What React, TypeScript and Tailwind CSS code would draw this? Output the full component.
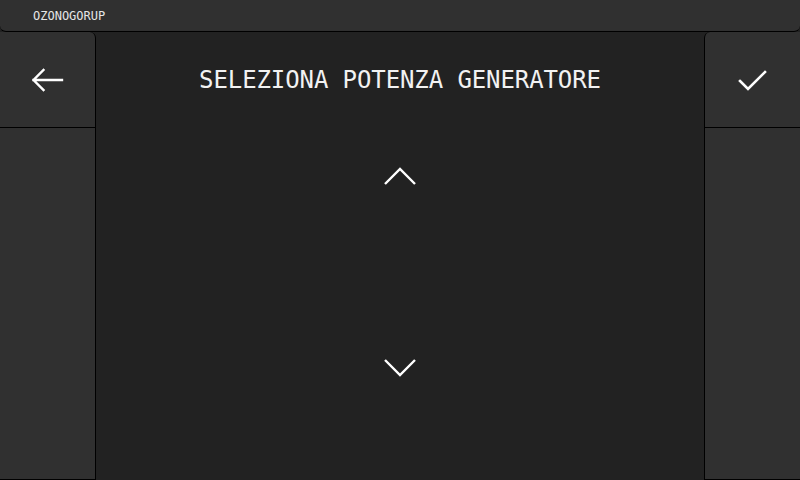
import React from "react";

const mono = { fontFamily: '"DejaVu Sans Mono", "Liberation Mono", monospace' };

export default function App() {
  return (
    <div className="w-[800px] h-[480px] bg-[#222222] flex flex-col overflow-hidden" style={mono}>
      <div className="h-[32px] shrink-0 bg-[#303030] border-b border-black rounded-b-[6px] flex items-center pl-[33px]">
        <span className="text-[12px] text-[#e6e6e6]">OZONOGORUP</span>
      </div>
      <div className="flex flex-1 min-h-0">
        <div className="w-[96px] shrink-0 bg-[#303030] border-r border-b border-black rounded-tr-[6px] flex flex-col">
          <div className="h-[96px] border-b border-black flex items-center justify-center">
            <svg width="40" height="40" viewBox="0 0 40 40" className="ml-[1px]">
              <path d="M5.5 20 H34 M15.5 10 L5.5 20 L15.5 30" fill="none" stroke="white" strokeWidth="2.4" strokeLinecap="square" strokeLinejoin="miter" />
            </svg>
          </div>
        </div>
        <div className="flex-1 flex flex-col items-center">
          <div className="h-[96px] w-full flex items-center justify-center">
            <span className="text-[24px] text-[#f2f2f2] tracking-[-0.1px]">SELEZIONA POTENZA GENERATORE</span>
          </div>
          <div className="h-[96px] w-full flex items-center justify-center">
            <svg width="40" height="24" viewBox="0 0 40 24">
              <path d="M5 20 L20 5 L35 20" fill="none" stroke="white" strokeWidth="2.4" />
            </svg>
          </div>
          <div className="h-[96px] w-full" />
          <div className="h-[96px] w-full flex items-center justify-center">
            <svg width="40" height="24" viewBox="0 0 40 24">
              <path d="M5 4 L20 19 L35 4" fill="none" stroke="white" strokeWidth="2.4" />
            </svg>
          </div>
        </div>
        <div className="w-[96px] shrink-0 bg-[#303030] border-l border-b border-black rounded-tl-[6px] flex flex-col">
          <div className="h-[96px] border-b border-black flex items-center justify-center">
            <svg width="40" height="40" viewBox="0 0 40 40">
              <path d="M7 21 L15 29 L32 12" fill="none" stroke="white" strokeWidth="2.6" strokeLinecap="square" />
            </svg>
          </div>
        </div>
      </div>
    </div>
  );
}
